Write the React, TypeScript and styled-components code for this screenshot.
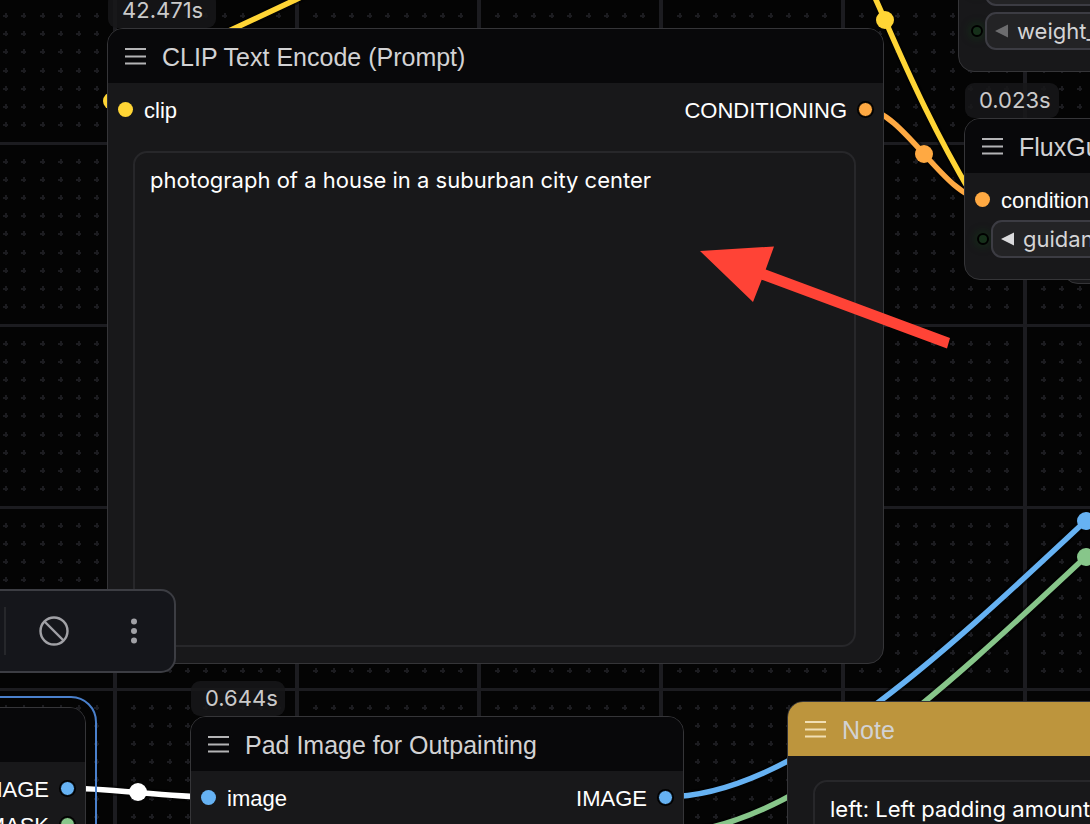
import React from "react";
import styled, { createGlobalStyle } from "styled-components";

const GlobalStyle = createGlobalStyle`
  *, *::before, *::after { box-sizing: border-box; }
  html, body { margin: 0; background: #040404; }
  body { overflow: hidden; }
  button, input, textarea { font: inherit; color: inherit; }
`;

const colors = {
  clip: "#ffd535",
  conditioning: "#ffa942",
  image: "#66b2f3",
  mask: "#87c68a",
  selected: "#ffffff",
};

const Board = styled.main`
  position: relative;
  height: 100vh;
  overflow: hidden;
  background: #040404;
  font-family: Inter, "Liberation Sans", sans-serif;
`;

const Backdrop = styled.svg`
  position: absolute;
  inset: 0;
  width: 100%;
  height: 100%;
`;

const Overlay = styled(Backdrop)`
  pointer-events: none;
`;

const Placed = styled.section<{ $x: number; $y: number; $w: number }>`
  position: absolute;
  left: ${(p) => p.$x}px;
  top: ${(p) => p.$y}px;
  width: ${(p) => p.$w}px;
`;

const Frame = styled.div`
  border: 1px solid #353538;
  border-radius: 16px;
  background: #18181a;
  overflow: hidden;
`;

const Selection = styled.div`
  border: 2px solid #4a80cc;
  border-radius: 26px;
  padding: 9px;
`;

const TimeBadge = styled.div<{ $wide?: boolean }>`
  position: absolute;
  left: 1px;
  bottom: 100%;
  width: ${(p) => (p.$wide ? 108 : 94)}px;
  height: 35px;
  padding-left: 14px;
  border-radius: 9px;
  background: rgba(24, 24, 26, 0.85);
  color: #cacaca;
  font-size: 22px;
  line-height: 34px;
  white-space: nowrap;
`;

const Header = styled.header<{ $tone?: "note" }>`
  display: flex;
  align-items: center;
  gap: 15px;
  height: 54px;
  padding: 0 17px;
  background: ${(p) => (p.$tone === "note" ? "#bd953d" : "#08080a")};
  color: ${(p) => (p.$tone === "note" ? "#f1dfb4" : "#b4b4b6")};
`;

const Title = styled.h2`
  margin: 0;
  padding-top: 2px;
  color: #d2d2d4;
  font-family: "Liberation Sans", Arial, sans-serif;
  font-size: 25px;
  font-weight: 400;
  line-height: 32px;
  white-space: nowrap;
`;

const Body = styled.div<{ $bottom?: number }>`
  padding: 8px 0 ${(p) => p.$bottom ?? 16}px;
`;

const SlotRow = styled.div`
  display: flex;
  justify-content: space-between;
  height: 36px;
  padding: 0 10px;
`;

const Slot = styled.div`
  display: flex;
  align-items: center;
  gap: 11px;
  color: #fff;
  font-family: "Liberation Sans", Arial, sans-serif;
  font-size: 22px;
  line-height: 32px;
  white-space: nowrap;

  &:only-child[data-side="out"] {
    margin-left: auto;
  }
`;

const SlotName = styled.span`
  padding-top: 4px;
`;

const Dot = styled.i<{ $color: string; $ringed?: boolean }>`
  flex: none;
  width: 15px;
  height: 15px;
  border-radius: 50%;
  border: ${(p) => (p.$ringed ? "1px solid #000" : "0")};
  box-shadow: ${(p) => (p.$ringed ? "0 0 0 1px #000" : "none")};
  background: ${(p) => p.$color};
`;

const TextBox = styled.textarea<{ $gap: number; $height: number }>`
  display: block;
  width: calc(100% - 52px);
  height: ${(p) => p.$height}px;
  margin: ${(p) => p.$gap}px 27px 0 25px;
  padding: 11px 15px;
  border: 2px solid #27272a;
  border-radius: 14px;
  outline: 0;
  resize: none;
  overflow: hidden;
  background: #18181a;
  color: #fff;
  font-family: Inter, sans-serif;
  font-size: 22px;
  line-height: 32px;
`;

const WidgetRow = styled.div`
  display: flex;
  align-items: center;
  gap: 2px;
  height: 38px;
  margin: 3px 0 6px;
  padding: 0 28px 0 12px;
`;

const Socket = styled.i`
  flex: none;
  width: 12px;
  height: 12px;
  border: 2px solid #000;
  border-radius: 50%;
  background: #16301a;
  box-shadow: 0 0 8px 1px rgba(16, 70, 22, 0.55);
`;

const Widget = styled.div`
  display: flex;
  flex: 1;
  align-items: center;
  gap: 8px;
  height: 38px;
  padding: 0 8px;
  border: 2px solid #3c3c43;
  border-radius: 11px;
  background: #232325;
  color: #d4d4d6;
  font-size: 22px;
  line-height: 34px;
  white-space: nowrap;
`;

const Step = styled.button<{ $dim?: boolean }>`
  display: flex;
  padding: 0;
  border: 0;
  background: none;
  color: ${(p) => (p.$dim ? "#6c6c6e" : "#dadadc")};
`;

const Toolbox = styled.nav`
  position: absolute;
  left: -240px;
  top: 589px;
  width: 416px;
  display: flex;
  align-items: center;
  justify-content: flex-end;
  padding: 14px 16px;
  border: 2px solid #3c3d43;
  border-radius: 15px;
  background: #15161b;
`;

const Divider = styled.span`
  width: 2px;
  height: 48px;
  margin-right: 24px;
  background: #26272b;
`;

const ToolButton = styled.button`
  display: flex;
  align-items: center;
  justify-content: center;
  width: 48px;
  height: 52px;
  padding: 0;
  border: 0;
  background: none;
  color: #a1a1a6;

  & + & {
    margin-left: 32px;
  }
`;

const MenuIcon = () => (
  <svg width="22" height="20" viewBox="0 0 22 20" aria-hidden="true">
    <path d="M0 3h21M0 10.500h21M0 17.500h21" stroke="currentColor" strokeWidth="2" />
  </svg>
);

const LeftTriangle = () => (
  <svg width="14" height="14" viewBox="0 0 14 14" aria-hidden="true">
    <path d="M0 7 13 .5v13z" fill="currentColor" />
  </svg>
);

const GRID = 18.2;
const ORIGIN_X = 115.4;
const ORIGIN_Y = 143.4;
const COLS = 210;
const ROWS = 130;

function buildGrid() {
  let major = "";
  let minor = "";
  for (let c = -7; c < COLS; c++) {
    const x = Math.round(ORIGIN_X + c * GRID);
    if (c % 10 === 0) {
      major += `M${x - 2} 0h4v2400h-4z`;
      continue;
    }
    for (let r = -8; r < ROWS; r++) {
      if (r % 10 === 0) continue;
      const y = Math.round(ORIGIN_Y + r * GRID);
      minor += `M${x - 3} ${y - 1}h5v2h-5zM${x - 1} ${y - 3}h2v5h-2z`;
    }
  }
  for (let r = 0; r < ROWS; r += 10) {
    const y = Math.round(ORIGIN_Y + r * GRID);
    major += `M0 ${y - 1}h3900v3h-3900z`;
  }
  return { major, minor };
}

const grid = buildGrid();

type LinkSpec = { d: string; color: string; dot?: [number, number] };

const links: LinkSpec[] = [
  { d: "M112 101C150 68 190 48 233 29L295 0 320 -12", color: colors.clip, dot: [112, 101] },
  { d: "M868 -18 885 20C912 82 936 134 972 195", color: colors.clip, dot: [885, 20] },
  { d: "M865 109C902 109 946 199 983 199", color: colors.conditioning, dot: [924, 154] },
  { d: "M67 788C102 788 173 797 208 797", color: colors.selected, dot: [138, 792] },
  { d: "M665 833C916 833 1255 281 1506 281", color: colors.mask, dot: [1086, 557] },
  { d: "M665 797C916 797 1255 245 1506 245", color: colors.image, dot: [1086, 521] },
];

const Link = ({ d, color, dot }: LinkSpec) => (
  <g fill="none">
    <path d={d} stroke="#000" strokeOpacity=".5" strokeWidth="10" />
    <path d={d} stroke={color} strokeWidth="5.500" />
    {dot && <circle cx={dot[0]} cy={dot[1]} r="9" fill={color} />}
  </g>
);

const NodeHeader = ({ title, tone }: { title?: string; tone?: "note" }) => (
  <Header $tone={tone}>
    {title && <MenuIcon />}
    {title && <Title>{title}</Title>}
  </Header>
);

const Input = ({ name, color }: { name: string; color: string }) => (
  <Slot data-side="in">
    <Dot $color={color} />
    <SlotName>{name}</SlotName>
  </Slot>
);

const Output = ({ name, color }: { name: string; color: string }) => (
  <Slot data-side="out">
    <SlotName>{name}</SlotName>
    <Dot $color={color} $ringed />
  </Slot>
);

const WidgetLine = ({ name, dim }: { name?: string; dim?: boolean }) => (
  <WidgetRow>
    <Socket />
    <Widget>
      <Step type="button" aria-label="Previous value" $dim={dim}>
        <LeftTriangle />
      </Step>
      {name}
    </Widget>
  </WidgetRow>
);

export default function App() {
  return (
    <Board>
      <GlobalStyle />
      <Backdrop aria-hidden="true">
        <path d={grid.minor} fill="#1c1c20" shapeRendering="crispEdges" />
        <path d={grid.major} fill="#1c1c20" shapeRendering="crispEdges" />
        {links.map((l) => (
          <Link key={l.d} {...l} />
        ))}
      </Backdrop>

      <Placed $x={1062} $y={200} $w={400}>
        <Frame>
          <Body $bottom={38}>
            <SlotRow />
          </Body>
        </Frame>
      </Placed>

      <Placed $x={958} $y={-98} $w={560}>
        <Frame>
          <NodeHeader />
          <Body $bottom={15}>
            <WidgetLine />
            <WidgetLine name="weight_dtype" dim />
          </Body>
        </Frame>
      </Placed>

      <Placed $x={964} $y={118} $w={500}>
        <TimeBadge>0.023s</TimeBadge>
        <Frame>
          <NodeHeader title="FluxGuidance" />
          <Body $bottom={15}>
            <SlotRow>
              <Input name="conditioning" color={colors.conditioning} />
            </SlotRow>
            <WidgetLine name="guidance" />
          </Body>
        </Frame>
      </Placed>

      <Placed $x={107} $y={28} $w={777}>
        <TimeBadge $wide>42.471s</TimeBadge>
        <Frame>
          <NodeHeader title="CLIP Text Encode (Prompt)" />
          <Body>
            <SlotRow>
              <Input name="clip" color={colors.clip} />
              <Output name="CONDITIONING" color={colors.conditioning} />
            </SlotRow>
            <TextBox
              $gap={24}
              $height={496}
              aria-label="Prompt"
              spellCheck={false}
              defaultValue="photograph of a house in a suburban city center"
            />
          </Body>
        </Frame>
      </Placed>

      <Placed $x={-310} $y={696} $w={407}>
        <Selection>
          <Frame>
            <NodeHeader />
            <Body>
              <SlotRow>
                <Output name="IMAGE" color={colors.image} />
              </SlotRow>
              <SlotRow>
                <Output name="MASK" color={colors.mask} />
              </SlotRow>
            </Body>
          </Frame>
        </Selection>
      </Placed>

      <Placed $x={190} $y={716} $w={494}>
        <TimeBadge>0.644s</TimeBadge>
        <Frame>
          <NodeHeader title="Pad Image for Outpainting" />
          <Body $bottom={80}>
            <SlotRow>
              <Input name="image" color={colors.image} />
              <Output name="IMAGE" color={colors.image} />
            </SlotRow>
          </Body>
        </Frame>
      </Placed>

      <Placed $x={787} $y={701} $w={500}>
        <Frame>
          <NodeHeader title="Note" tone="note" />
          <Body>
            <TextBox
              $gap={16}
              $height={200}
              aria-label="Note"
              spellCheck={false}
              defaultValue="left: Left padding amount"
            />
          </Body>
        </Frame>
      </Placed>

      <Toolbox aria-label="Selection tools">
        <Divider />
        <ToolButton type="button" aria-label="Bypass">
          <svg width="32" height="32" viewBox="0 0 32 32" fill="none" stroke="currentColor" strokeWidth="2.400">
            <circle cx="16" cy="16" r="13.500" />
            <path d="m6.500 6.500 19 19" />
          </svg>
        </ToolButton>
        <ToolButton type="button" aria-label="More options">
          <svg width="8" height="28" viewBox="0 0 8 28" fill="currentColor">
            <circle cx="4" cy="4.500" r="3" />
            <circle cx="4" cy="14" r="3" />
            <circle cx="4" cy="23.500" r="3" />
          </svg>
        </ToolButton>
      </Toolbox>

      <Overlay aria-hidden="true">
        <path d="M700 251 774 246.500 765.700 269.500 950 338 947 348.500 761.700 279.700 753 302z" fill="#ff4336" />
      </Overlay>
    </Board>
  );
}
